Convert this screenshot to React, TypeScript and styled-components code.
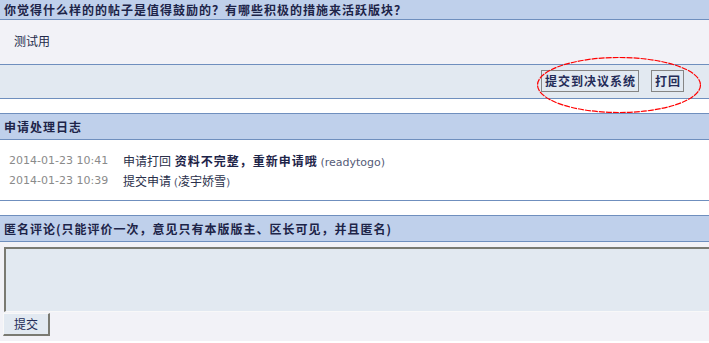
import { ReactElement } from 'react';
import styled, { createGlobalStyle } from 'styled-components';

const GlobalStyle = createGlobalStyle`
  html, body {
    margin: 0;
    padding: 0;
    background: #fff;
    overflow: hidden;
  }
  body {
    font-family: "Liberation Sans", "Noto Sans CJK SC", sans-serif;
    font-size: 12px;
    color: #222a4a;
  }
`;

const CJK = `"Noto Sans CJK SC", "Liberation Sans", sans-serif`;
const LATIN = `"DejaVu Sans", "Noto Sans CJK SC", sans-serif`;

interface LogEntry {
  time: string;
  action: string;
  reason?: string;
  user: string;
}

const logs: LogEntry[] = [
  { time: '2014-01-23 10:41', action: '申请打回', reason: '资料不完整，重新申请哦', user: 'readytogo' },
  { time: '2014-01-23 10:39', action: '提交申请', user: '凌宇娇雪' },
];

const isLatin = (s: string) => /^[\x00-\x7f]+$/.test(s);

function App(): ReactElement {
  return (
    <>
      <GlobalStyle />
      <Page>
        <Section>
          <Header $top={false} $height={19}>你觉得什么样的的帖子是值得鼓励的？有哪些积极的措施来活跃版块？</Header>
          <Content>测试用</Content>
          <ActionBar>
            <ActionButton>提交到决议系统</ActionButton>
            <ActionButton>打回</ActionButton>
          </ActionBar>
        </Section>

        <Section>
          <Header $top $height={25}>申请处理日志</Header>
          <LogBody>
            {logs.map((log) => (
              <LogRow key={log.time}>
                <LogTime>{log.time}</LogTime>
                <LogText>
                  {log.action}
                  {log.reason && <Reason> {log.reason}</Reason>} <User>(</User>
                  {isLatin(log.user) ? <User>{log.user}</User> : log.user}
                  <User>)</User>
                </LogText>
              </LogRow>
            ))}
          </LogBody>
        </Section>

        <Section>
          <Header $top $height={25}>匿名评论(只能评价一次，意见只有本版版主、区长可见，并且匿名)</Header>
          <CommentBody>
            <CommentBox />
            <SubmitButton>提交</SubmitButton>
          </CommentBody>
        </Section>

        <Mark width="166" height="58" viewBox="0 0 166 58">
          <ellipse cx="83" cy="29" rx="81.5" ry="27.5" fill="none" stroke="#ff0000" strokeWidth="1.2" strokeDasharray="6 1" />
        </Mark>
      </Page>
    </>
  );
}

export default App;

const Page = styled.div`
  position: relative;
  display: flex;
  flex-direction: column;
  gap: 14px;
  width: 709px;
`;

const Section = styled.div`
  display: flex;
  flex-direction: column;
`;

const Header = styled.div<{ $top: boolean; $height: number }>`
  height: ${(p) => p.$height}px;
  line-height: ${(p) => p.$height}px;
  padding-left: 4px;
  background-color: #bfd0eb;
  border-top: ${(p) => (p.$top ? '1px solid #6f8fbe' : 'none')};
  border-bottom: 1px solid #6f8fbe;
  font-family: ${CJK};
  font-weight: 700;
  font-size: 12px;
  letter-spacing: 1px;
  color: #1d2448;
  white-space: nowrap;
  overflow: hidden;
`;

const Content = styled.div`
  height: 44px;
  line-height: 42px;
  padding-left: 14px;
  background-color: #f2f2f7;
  font-family: ${CJK};
  color: #222a4a;
`;

const ActionBar = styled.div`
  display: flex;
  justify-content: flex-end;
  align-items: center;
  gap: 12px;
  height: 35px;
  padding-right: 25px;
  padding-bottom: 2px;
  box-sizing: border-box;
  background-color: #e2e9f1;
  border-top: 1px solid #6f8fbe;
  border-bottom: 1px solid #6f8fbe;
`;

const ActionButton = styled.div`
  height: 20px;
  line-height: 20px;
  padding: 0 2px 0 3px;
  border: 1px solid #858585;
  font-family: ${CJK};
  font-weight: 700;
  font-size: 12px;
  letter-spacing: 1px;
  color: #242c58;
`;

const LogBody = styled.div`
  display: flex;
  flex-direction: column;
  padding: 10px 0 10px 9px;
  background-color: #fff;
  border-bottom: 1px solid #6f8fbe;
`;

const LogRow = styled.div`
  display: flex;
  align-items: center;
  height: 20px;
`;

const LogTime = styled.div`
  width: 114px;
  font-family: ${LATIN};
  font-size: 11px;
  color: #8a8a8a;
`;

const LogText = styled.div`
  font-family: ${CJK};
  font-size: 12px;
  color: #2a2f4a;
  white-space: nowrap;
`;

const Reason = styled.span`
  font-weight: 700;
  letter-spacing: 1px;
  color: #1d2448;
`;

const User = styled.span`
  font-family: ${LATIN};
  font-size: 11px;
  color: #555b77;
`;

const CommentBody = styled.div`
  display: flex;
  flex-direction: column;
  align-items: flex-start;
  gap: 1px;
  height: 99px;
  padding: 5px 0 0 4px;
  box-sizing: border-box;
  background-color: #f2f2f7;
  overflow: hidden;
`;

const CommentBox = styled.div`
  width: 740px;
  height: 65px;
  box-sizing: border-box;
  background-color: #e2e9f1;
  border-top: 2px solid #7a7a72;
  border-left: 2px solid #7a7a72;
  border-bottom: 1px solid #f8f8f8;
  flex-shrink: 0;
`;

const SubmitButton = styled.div`
  margin-left: -1px;
  width: 47px;
  height: 23px;
  box-sizing: border-box;
  line-height: 20px;
  text-align: center;
  background-color: #e2e9f1;
  border-top: 1px solid #f8f8f8;
  border-left: 1px solid #f8f8f8;
  border-right: 2px solid #7a7a72;
  border-bottom: 2px solid #7a7a72;
  font-family: ${CJK};
  font-size: 12px;
  color: #242c58;
`;

const Mark = styled.svg`
  position: absolute;
  left: 536px;
  top: 56px;
  pointer-events: none;
`;
